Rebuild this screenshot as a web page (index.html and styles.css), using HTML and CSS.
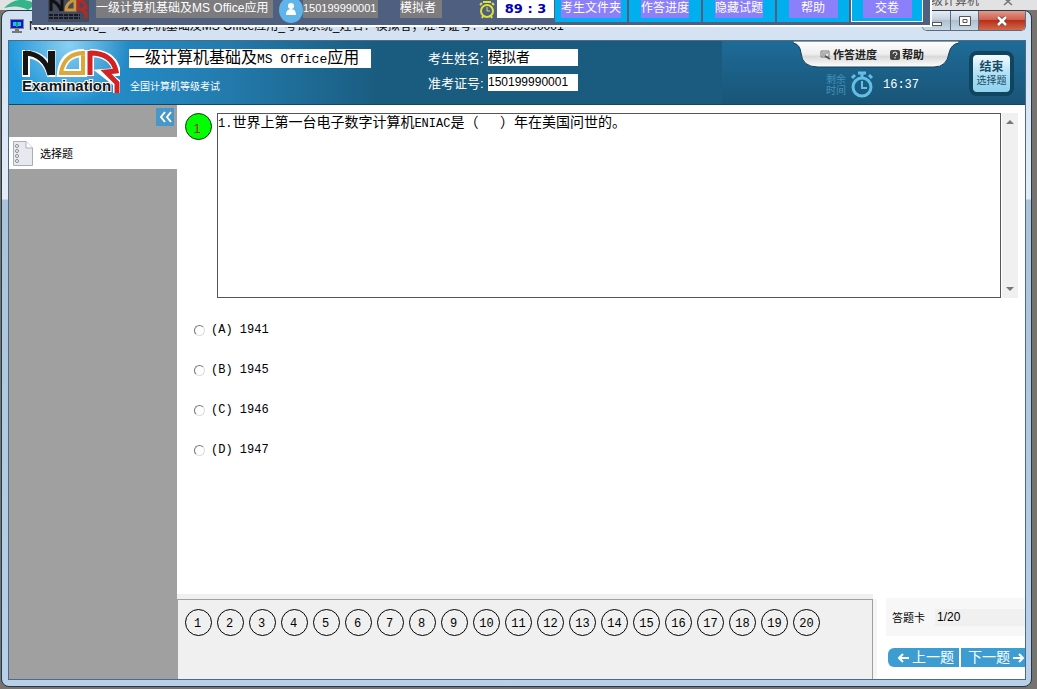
FILE: index.html
```html
<!DOCTYPE html>
<html lang="zh-CN">
<head>
    <meta charset="UTF-8">
    <meta name="viewport" content="width=device-width, initial-scale=1.0">
    <title>NCRE无纸化考试系统</title>
    <link rel="stylesheet" href="styles.css">
</head>
<body>
    <div class="behind">
        <svg class="behind-logo" width="34" height="14" viewBox="0 0 34 14"><path d="M0 8Q14 -6 32 4L24 10Q14 4 0 8Z" fill="#35b48c"/></svg>
        <span class="behind-title">级计算机</span>
        <svg class="behind-close" width="10" height="8" viewBox="0 0 10 8"><path d="M1 -2L9 5M9 -2L1 5" stroke="#777" stroke-width="1.5"/></svg>
    </div>

    <div class="window">
        <div class="titlebar">
            <svg class="app-icon" width="14" height="14" viewBox="0 0 14 14">
                <rect width="14" height="10" fill="#888"/><rect x="1" y="1" width="12" height="8" fill="#1414d8"/>
                <path d="M3 3h3v4H3zM8 3h3v4H8z" fill="#19c2ef"/><path d="M6 3h2v5H6z" fill="#16a34a"/>
                <path d="M5 10h4v2h3v2H2v-2h3z" fill="#777"/>
            </svg>
            <span class="window-title">NCRE无纸化_一级计算机基础及MS Office应用_考试系统_姓名：模拟者；准考证号：150199990001</span>
            <div class="window-buttons">
                <button class="min" aria-label="最小化"><svg width="12" height="12" viewBox="0 0 12 12"><rect x="1.5" y="7.5" width="9" height="3" fill="#fff" stroke="#555"/></svg></button>
                <button class="max" aria-label="最大化"><svg width="12" height="10" viewBox="0 0 12 10"><path d="M.5.5h11v9H.5zM4 3.5h4v3H4z" fill="#fff" stroke="#555"/></svg></button>
                <button class="close" aria-label="关闭"><svg width="12" height="10" viewBox="0 0 12 10"><path d="M2 1L10 9M10 1L2 9" stroke="#733" stroke-width="4"/><path d="M2 1L10 9M10 1L2 9" stroke="#fff" stroke-width="2.5"/></svg></button>
            </div>
        </div>

        <div class="client">
            <header class="header">
                <svg class="logo" width="110" height="60" viewBox="0 0 110 60">
                    <g fill="none" stroke="#fff" stroke-width="8">
                        <path d="M16 10V37M16 14Q36 15 41 36M41.5 10V37"/>
                        <path d="M74 13Q53 13 51 33H73V10"/>
                        <path d="M80 10V36M80 13Q103 13 107 32L94 33L107 43V53"/>
                    </g>
                    <path d="M13 11H18V35H13ZM38 11H45V35H38Z" fill="#151515"/>
                    <path d="M15 13Q35 14 40 35" fill="none" stroke="#151515" stroke-width="5"/>
                    <path d="M75 13Q54 13 51 33H73V11" fill="none" stroke="#dda83a" stroke-width="4"/>
                    <path d="M80 11V35M80 13Q102 13 106 31L96 32L107 43V53" fill="none" stroke="#d32222" stroke-width="5"/>
                    <text x="12" y="51" class="logo-text">Examination</text>
                </svg>
                <div class="exam-name">
                    <h1>一级计算机基础及<span class="latin">MS Office</span>应用</h1>
                    <p>全国计算机等级考试</p>
                </div>
                <dl class="candidate">
                    <div><dt>考生姓名:</dt><dd class="name">模拟者</dd></div>
                    <div><dt>准考证号:</dt><dd>150199990001</dd></div>
                </dl>
                <div class="header-right">
                    <div class="status">
                        <nav class="tab">
                            <svg class="tab-shape" width="166" height="28" viewBox="0 0 166 28">
                                <defs><linearGradient id="tabFill" x2="0" y2="1"><stop stop-color="#fff"/><stop offset=".5" stop-color="#eee"/><stop offset=".6" stop-color="#d9d9d9"/><stop offset="1" stop-color="#fff"/></linearGradient></defs>
                                <path d="M0 2Q7 3 8 12Q9 26 25 26H141Q154 26 156 12Q158 3 166 2V0H0Z" fill="url(#tabFill)" stroke="#173d55"/>
                            </svg>
                            <a href="#progress"><svg width="11" height="10" viewBox="0 0 11 10"><path d="M1 1h8v6H1zM2 3h6M2 5h4" fill="none" stroke="#777"/><path d="M5 6l5 3" stroke="#555" stroke-width="2"/></svg>作答进度</a>
                            <a href="#help"><svg width="10" height="10" viewBox="0 0 10 10"><rect width="10" height="10" rx="2" fill="#444"/><path d="M3 4q0-2 2-2t2 2q0 1-2 2M5 7v1.5" fill="none" stroke="#fff"/></svg>帮助</a>
                        </nav>
                        <div class="timer">
                            <span class="timer-label">剩余<br>时间</span>
                            <svg width="24" height="28" viewBox="0 0 24 28">
                                <circle cx="12" cy="16" r="9" fill="none" stroke="#63bfe6" stroke-width="3"/>
                                <path d="M8 2h8M12 2v5M2 7l3-3M22 7l-3-3" stroke="#63bfe6" stroke-width="3"/>
                                <path d="M12 10v7h5" fill="none" stroke="#63bfe6" stroke-width="2"/>
                            </svg>
                            <time>16:37</time>
                        </div>
                    </div>
                    <button class="end-button"><b>结束</b>选择题</button>
                </div>
            </header>

            <div class="main">
                <aside class="sidebar">
                    <div class="sidebar-head">
                        <button aria-label="收起"><svg width="13" height="12" viewBox="0 0 13 12"><path d="M6 1L2 6L6 11M12 1L8 6L12 11" fill="none" stroke="#fff" stroke-width="2"/></svg></button>
                    </div>
                    <a class="sidebar-item" href="#choice">
                        <svg width="20" height="25" viewBox="0 0 20 25">
                            <path d="M.5.5H13L19.5 7V24.5H.5Z" fill="#e6e9ef" stroke="#a9adb5"/>
                            <path d="M13 .5V7H19.5" fill="#fff" stroke="#a9adb5"/>
                            <g fill="#fff" stroke="#888"><circle cx="4" cy="5" r="1.5"/><circle cx="4" cy="10" r="1.5"/><circle cx="4" cy="15" r="1.5"/><circle cx="4" cy="20" r="1.5"/></g>
                        </svg>
                        选择题
                    </a>
                </aside>

                <div class="content">
                    <section class="question">
                        <span class="question-number">1</span>
                        <div class="question-text"><span class="latin">1.</span>世界上第一台电子数字计算机<span class="latin">ENIAC</span>是（<span class="latin">&nbsp;&nbsp;&nbsp;</span>）年在美国问世的。</div>
                        <div class="scrollbar">
                            <svg width="8" height="4" viewBox="0 0 8 4"><path d="M0 4L4 0L8 4Z" fill="#777"/></svg>
                            <svg width="8" height="4" viewBox="0 0 8 4"><path d="M0 0L4 4L8 0Z" fill="#777"/></svg>
                        </div>
                    </section>

                    <form class="options">
                        <label><input type="radio" name="answer" value="A">(A) 1941</label>
                        <label><input type="radio" name="answer" value="B">(B) 1945</label>
                        <label><input type="radio" name="answer" value="C">(C) 1946</label>
                        <label><input type="radio" name="answer" value="D">(D) 1947</label>
                    </form>

                    <footer class="footer">
                        <div class="numbers">
                            <button>1</button><button>2</button><button>3</button><button>4</button><button>5</button>
                            <button>6</button><button>7</button><button>8</button><button>9</button><button>10</button>
                            <button>11</button><button>12</button><button>13</button><button>14</button><button>15</button>
                            <button>16</button><button>17</button><button>18</button><button>19</button><button>20</button>
                        </div>
                        <div class="pager">
                            <div class="card"><span>答题卡</span><span class="count">1/20</span></div>
                            <div class="pager-buttons">
                                <button class="prev"><svg width="12" height="10" viewBox="0 0 12 10"><path d="M6 1L2 5L6 9M2 5H12" fill="none" stroke="#fff" stroke-width="2"/></svg>上一题</button>
                                <button class="next">下一题<svg width="12" height="10" viewBox="0 0 12 10"><path d="M6 1L10 5L6 9M10 5H0" fill="none" stroke="#fff" stroke-width="2"/></svg></button>
                            </div>
                        </div>
                    </footer>
                </div>
            </div>
        </div>
    </div>

    <div class="toolbar">
        <div class="toolbar-info">
            <svg class="toolbar-logo" width="41" height="22" viewBox="0 0 41 22">
                <rect width="41" height="22" fill="#454b5e"/>
                <g fill="none" stroke-width="3"><path d="M3 0V11M3 0Q11 3 13 11M14 0V11" stroke="#111"/><path d="M26 0Q18 3 18 10H27V0" stroke="#c9993c"/><path d="M30 0V11M30 0Q37 1 38 8L33 9L38 13V18" stroke="#b52a25"/></g>
                <path d="M1 15H32M1 18H32" stroke="#181b24" stroke-width="2" stroke-dasharray="4 1"/>
            </svg>
            <span class="tag exam">一级计算机基础及MS Office应用</span>
            <svg class="avatar" width="24" height="23" viewBox="0 0 24 23">
                <ellipse cx="12" cy="10" rx="12" ry="13" fill="#5fb4ea"/><circle cx="12" cy="6" r="3" fill="#fff"/><path d="M7 15Q7 9 12 9Q17 9 17 15Z" fill="#fff"/>
            </svg>
            <span class="tag ticket">150199990001</span>
            <span class="tag person">模拟者</span>
            <svg class="clock" width="18" height="20" viewBox="0 0 18 20">
                <circle cx="9" cy="11" r="6" fill="none" stroke="#dfe23a" stroke-width="2"/><path d="M5 2h8M2 5l2-2M16 5l-2-2M4 18l1-2M14 18l-1-2" stroke="#dfe23a" stroke-width="2"/><path d="M9 7v4h3" fill="none" stroke="#dfe23a"/>
            </svg>
            <span class="countdown">89 : 3</span>
        </div>
        <div class="toolbar-buttons">
            <button><span>考生文件夹</span></button>
            <button><span>作答进度</span></button>
            <button><span>隐藏试题</span></button>
            <button><span class="wide">帮助</span></button>
            <button class="submit"><span class="wide">交卷</span></button>
        </div>
    </div>
</body>
</html>
```
FILE: styles.css
```css
* {
    box-sizing: border-box;
}
body {
    position: relative;
    display: flex;
    flex-direction: column;
    height: 100vh;
    margin: 0;
    overflow: hidden;
    background: #77736f;
    font-family: "Liberation Sans", "Noto Sans CJK SC", sans-serif;
    font-size: 12px;
    color: #000;
}
button {
    padding: 0;
    border: none;
    font: inherit;
    cursor: pointer;
}
a {
    color: inherit;
    text-decoration: none;
}
svg {
    flex: none;
}
.latin {
    font-family: "Liberation Mono", monospace;
}

/* desktop behind the exam window */
.behind {
    display: flex;
    flex: none;
    height: 10px;
    background: #e2e2e4;
    padding: 0 24px 0 4px;
}
.behind-title {
    margin-left: auto;
    margin-right: 24px;
    line-height: 2px;
    color: #555;
}

/* window */
.window {
    display: flex;
    flex: 1;
    flex-direction: column;
    min-height: 0;
    margin: 0 5px 2px 1px;
    padding: 0 5px 6px 6px;
    border: 1px solid #263947;
    border-radius: 8px;
    background: linear-gradient(#d2e1f2, #e3edf8 188px, #abc3da 189px, #b9d0ea);
}
.titlebar {
    display: flex;
    flex: none;
    align-items: flex-start;
    height: 29px;
    padding-left: 2px;
}
.app-icon {
    margin-top: 8px;
}
.window-title {
    flex: 1;
    margin-left: 5px;
    overflow: hidden;
    font-size: 12px;
    line-height: 30px;
    white-space: nowrap;
}
.window-buttons {
    display: flex;
    border: 1px solid #5a6b7b;
    border-top: none;
    border-radius: 0 0 5px 5px;
    overflow: hidden;
}
.window-buttons button {
    display: flex;
    align-items: center;
    justify-content: center;
    width: 28px;
    height: 19px;
    border-right: 1px solid #5a6b7b;
    background: linear-gradient(#e6edf5, #c1cedb 50%, #aebfcf 50%, #c9d8e6);
}
.window-buttons .close {
    width: 46px;
    border-right: none;
    background: linear-gradient(#e09a8c, #cf5a44 50%, #b8301a 50%, #d2684a);
}
.client {
    display: flex;
    flex: 1;
    flex-direction: column;
    min-height: 0;
    border: 1px solid #4d6a86;
    background: #fff;
}

/* header */
.header {
    display: flex;
    flex: none;
    height: 64px;
    border-bottom: 1px solid #174662;
    background: radial-gradient(circle at 60px 4px, #8ad0f2, transparent 60px), linear-gradient(90deg, #2199de, #2480b4 190px, #1a5c80 370px, #195a7e);
    color: #fff;
}
.logo {
    margin: -1px 0 0 1px;
}
.logo-text {
    fill: #151515;
    stroke: #fff;
    stroke-width: 2px;
    paint-order: stroke;
    font-size: 15px;
    font-weight: bold;
}
.exam-name {
    flex: none;
    width: 308px;
    padding: 8px 0 0 9px;
}
.exam-name h1 {
    width: 242px;
    margin: 0;
    background: #fff;
    color: #000;
    font-size: 16px;
    font-weight: normal;
    line-height: 17px;
    white-space: nowrap;
}
.exam-name .latin {
    font-size: 13px;
}
.exam-name p {
    margin: 9px 0 0 1px;
    font-size: 10px;
    line-height: 20px;
}
.candidate {
    display: flex;
    flex: none;
    flex-direction: column;
    gap: 7px;
    margin: 8px 0 0;
}
.candidate div {
    display: flex;
}
.candidate dt {
    width: 60px;
    padding-top: 1px;
    font-size: 13px;
    line-height: 17px;
    white-space: nowrap;
}
.candidate dd {
    width: 90px;
    height: 17px;
    margin: 0;
    background: #fff;
    color: #000;
    font-size: 12px;
    line-height: 16px;
}
.candidate .name {
    font-size: 14px;
}
.header-right {
    display: flex;
    flex: 1;
    justify-content: flex-end;
    margin-left: 144px;
    padding-right: 11px;
    background: linear-gradient(#1e6b98, #195577);
}
.status {
    flex: none;
    width: 166px;
    margin-right: 10px;
}
.tab {
    position: relative;
    display: flex;
    gap: 13px;
    height: 28px;
    padding-left: 27px;
    color: #222;
    font-size: 11px;
    font-weight: bold;
    line-height: 27px;
}
.tab-shape {
    position: absolute;
    top: 0;
    left: 0;
}
.tab a {
    position: relative;
    display: flex;
    align-items: center;
    gap: 2px;
}
.timer {
    display: flex;
    align-items: center;
    padding: 2px 0 0 33px;
}
.timer-label {
    width: 24px;
    color: #4391b8;
    font-size: 10px;
    line-height: 11px;
}
.timer time {
    margin-left: 9px;
    font-family: "Liberation Mono", monospace;
    font-size: 12px;
}
.end-button {
    flex: none;
    align-self: flex-start;
    width: 45px;
    height: 45px;
    margin-top: 10px;
    border: 4px solid #10445f;
    border-radius: 8px;
    background: linear-gradient(#f4fcff, #a9dff3 55%, #8fd2ee);
    color: #1d4a66;
    font-size: 10px;
    line-height: 13px;
    white-space: nowrap;
}
.end-button b {
    display: block;
    font-size: 12px;
}

/* sidebar */
.main {
    display: flex;
    flex: 1;
    min-height: 0;
}
.sidebar {
    flex: none;
    width: 168px;
    background: #a0a0a0;
}
.sidebar-head {
    display: flex;
    justify-content: flex-end;
    height: 32px;
    padding: 3px 3px 0 0;
}
.sidebar-head button {
    display: flex;
    align-items: center;
    justify-content: center;
    width: 18px;
    height: 18px;
    background: #4797c8;
}
.sidebar-item {
    display: flex;
    align-items: center;
    gap: 7px;
    height: 32px;
    padding-left: 4px;
    background: #fff;
    font-size: 11px;
}

/* question */
.content {
    display: flex;
    flex: 1;
    flex-direction: column;
    min-width: 0;
}
.question {
    display: flex;
    height: 185px;
    margin: 8px 7px 0 8px;
}
.question-number {
    width: 27px;
    height: 27px;
    margin-right: 5px;
    padding-right: 3px;
    border: 1px solid #003c00;
    border-radius: 50%;
    background: #0f0;
    color: #b22222;
    font-size: 13px;
    line-height: 29px;
    text-align: center;
}
.question-text {
    flex: 1;
    border: 1px solid #555;
    font-size: 14px;
    line-height: 16px;
}
.question-text .latin {
    font-size: 12px;
}
.scrollbar {
    display: flex;
    flex-direction: column;
    align-items: center;
    justify-content: space-between;
    width: 16px;
    margin-left: 1px;
    padding: 7px 0;
    background: #f0f0f0;
}
.options {
    display: flex;
    flex: 1;
    flex-direction: column;
    gap: 20px;
    padding: 22px 0 0 17px;
    font-family: "Liberation Mono", monospace;
    font-size: 12px;
    line-height: 20px;
}
.options label {
    display: flex;
    align-items: center;
    gap: 6px;
}
.options input {
    appearance: none;
    width: 11px;
    height: 11px;
    margin: 0;
    border: 1px solid #777;
    border-right-color: #ddd;
    border-bottom-color: #ddd;
    border-radius: 50%;
}
.options input:checked {
    background: radial-gradient(#000 2px, #fff 3px);
}

/* footer */
.footer {
    display: flex;
    height: 85px;
}
.numbers {
    display: flex;
    flex: 1;
    align-items: flex-start;
    gap: 5px;
    margin-top: 5px;
    padding: 9px 0 0 7px;
    border: solid #a0a0a0;
    border-width: 1px 1px 0 1px;
    background: #f0f0f0;
    box-shadow: 0 -5px #f0f0f0, 4px 0 #f5f5f5;
}
.numbers button {
    width: 27px;
    height: 27px;
    padding-right: 2px;
    border: 1px solid #000;
    border-radius: 50%;
    background: #f0f0f0;
    font-family: "Liberation Mono", monospace;
    font-size: 12px;
    line-height: 29px;
}
.numbers button:nth-child(n+10) {
    padding: 0;
}
.pager {
    display: flex;
    flex-direction: column;
    gap: 12px;
    width: 139px;
    margin-left: 13px;
    padding-top: 4px;
}
.card {
    display: flex;
    align-items: center;
    height: 38px;
    padding-left: 6px;
    background: #f7f7f7;
    font-size: 11px;
}
.count {
    flex: 1;
    margin-left: 10px;
    padding-left: 2px;
    background: #f0f0f0;
    font-size: 12px;
    line-height: 17px;
}
.pager-buttons {
    display: flex;
    gap: 2px;
    padding-left: 2px;
}
.pager-buttons button {
    display: flex;
    flex: 1;
    align-items: center;
    justify-content: flex-end;
    gap: 3px;
    height: 19px;
    background: #3d9dd3;
    color: #fff;
    font-size: 14px;
    line-height: 17px;
    white-space: nowrap;
}
.pager-buttons .prev {
    flex: 0 0 71px;
    padding-right: 5px;
    border-radius: 6px 0 0 6px;
}

/* toolbar on top of the window */
.toolbar {
    position: absolute;
    top: 0;
    left: 32px;
    display: flex;
    height: 27px;
    padding: 0 7px 0 16px;
    border: solid #fff;
    border-width: 0 2px 2px 0;
    background: #4f5f80;
    color: #fff;
}
.toolbar-info {
    display: flex;
    align-items: flex-start;
    width: 505px;
}
.tag {
    flex: none;
    height: 18px;
    background: #7c7c7e;
    line-height: 17px;
    white-space: nowrap;
}
.exam {
    width: 177px;
    margin: 0 6px 0 7px;
}
.ticket {
    width: 75px;
    margin-right: 22px;
    font-size: 11px;
}
.person {
    width: 42px;
    margin-right: 36px;
}
.countdown {
    flex: none;
    width: 57px;
    height: 18px;
    margin-left: 1px;
    background: #fff;
    color: #0000b4;
    font-family: "DejaVu Sans", sans-serif;
    font-size: 13px;
    font-weight: bold;
    line-height: 17px;
    text-align: center;
}
.toolbar-buttons {
    display: flex;
    gap: 2px;
    margin-left: 2px;
}
.toolbar-buttons button {
    width: 72px;
    height: 22px;
    background: #00b0ee;
    color: #fff;
    line-height: 17px;
    white-space: nowrap;
}
.toolbar-buttons span {
    display: inline-block;
    height: 18px;
    margin-bottom: 4px;
    background: #8c80fa;
}
.toolbar-buttons .wide {
    width: 49px;
}
.toolbar-buttons .submit {
    border: 1px solid #fff;
    border-top: none;
}
```
